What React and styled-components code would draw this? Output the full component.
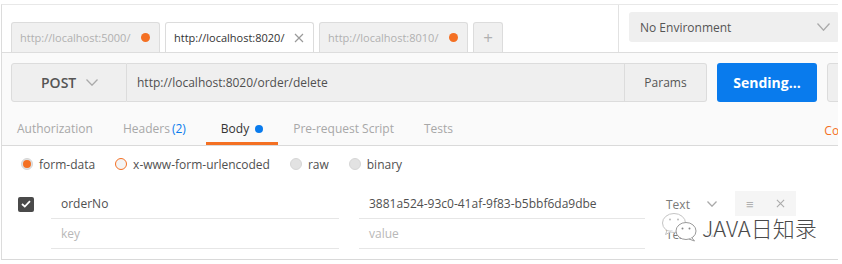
import React from 'react';
import styled, { createGlobalStyle } from 'styled-components';

const GlobalStyle = createGlobalStyle`
  html, body {
    margin: 0;
    padding: 0;
    background: #fff;
  }
  body {
    font-family: "Open Sans", "Noto Sans", sans-serif;
    font-size: 12px;
    color: #505050;
    overflow: hidden;
  }
`;

const Frame = styled.div`
  position: relative;
  width: 836px;
  height: 254px;
  margin: 4px 0 0 1px;
  border-top: 1px solid #e8e8e8;
  border-left: 1px solid #dcdcdc;
  border-bottom: 1px solid #d9d9d9;
  overflow: hidden;
`;

const Inner = styled.div`
  width: 930px;
`;

/* ---------- header: request tabs + environment ---------- */

const Header = styled.div`
  display: flex;
  height: 47px;
  border-bottom: 1px solid #dddddd;
  background: #fff;
`;

const TabStrip = styled.div`
  width: 607px;
  padding-left: 9px;
  display: flex;
  align-items: flex-end;
  gap: 5px;
  border-right: 1px solid #e2e2e2;
`;

const ReqTab = styled.div`
  box-sizing: border-box;
  width: ${p => (p.$plus ? 30 : 149)}px;
  height: 30px;
  display: flex;
  align-items: center;
  justify-content: ${p => (p.$plus ? 'center' : 'space-between')};
  padding: ${p => (p.$plus ? '0' : '0 9px 0 8px')};
  border: 1px solid #dcdcdc;
  border-bottom: none;
  border-radius: 3px 3px 0 0;
  background: ${p => (p.$active ? '#ffffff' : '#f0f0f0')};
  color: ${p => (p.$active ? '#333333' : '#b0b0b0')};
  font-size: ${p => (p.$plus ? 17 : 11)}px;
  white-space: nowrap;
`;

const Dot = styled.span`
  display: inline-block;
  width: ${p => p.$size || 9}px;
  height: ${p => p.$size || 9}px;
  border-radius: 50%;
  background: ${p => p.$color};
  flex: none;
`;

const EnvArea = styled.div`
  padding: 7px 10px;
`;

const EnvSelect = styled.div`
  box-sizing: border-box;
  width: 210px;
  height: 30px;
  display: flex;
  align-items: center;
  justify-content: space-between;
  padding: 0 9px 0 11px;
  background: #efefef;
  border-radius: 3px;
  color: #555;
`;

/* ---------- request bar ---------- */

const RequestSection = styled.div`
  background: #fafafa;
  border-bottom: 1px solid #dadada;
`;

const RequestBar = styled.div`
  display: flex;
  gap: 10px;
  height: 39px;
  padding: 10px 9px 0;
`;

const UrlGroup = styled.div`
  display: flex;
  width: 696px;
  flex: none;
`;

const Method = styled.div`
  box-sizing: border-box;
  width: 116px;
  display: flex;
  align-items: center;
  gap: 10px;
  padding-left: 29px;
  background: #efefef;
  border: 1px solid #dcdcdc;
  border-radius: 3px 0 0 3px;
  font-size: 14px;
  font-weight: 600;
  color: #555;
`;

const UrlInput = styled.div`
  flex: 1;
  display: flex;
  align-items: center;
  padding-left: 10px;
  background: #efefef;
  border: 1px solid #dcdcdc;
  border-left: none;
  color: #505050;
`;

const ParamsButton = styled.div`
  box-sizing: border-box;
  width: 82px;
  display: flex;
  align-items: center;
  justify-content: center;
  background: #efefef;
  border: 1px solid #dcdcdc;
  border-left: none;
  border-radius: 0 3px 3px 0;
  color: #555;
`;

const SendButton = styled.div`
  width: 100px;
  flex: none;
  display: flex;
  align-items: center;
  justify-content: center;
  background: #097bed;
  border-radius: 3px;
  color: #fff;
  font-size: 14px;
  font-weight: 700;
`;

const SaveButton = styled.div`
  box-sizing: border-box;
  width: 90px;
  flex: none;
  display: flex;
  align-items: center;
  padding-left: 10px;
  background: #efefef;
  border: 1px solid #dcdcdc;
  border-radius: 3px;
  color: #555;
  font-size: 14px;
  font-weight: 600;
`;

/* ---------- builder tabs ---------- */

const BuilderTabs = styled.div`
  display: flex;
  height: 33px;
  margin-top: 10px;
`;

const BuilderTab = styled.div`
  box-sizing: border-box;
  height: 33px;
  display: flex;
  align-items: center;
  gap: 6px;
  padding: 3px 15px 0;
  border-bottom: 3px solid ${p => (p.$active ? '#f47023' : 'transparent')};
  color: ${p => (p.$active ? '#333' : '#a8a8a8')};
  white-space: nowrap;
`;

const Count = styled.span`
  color: #097bed;
  margin-left: 2px;
  margin-right: 5px;
`;

const Links = styled.div`
  margin-left: auto;
  display: flex;
  align-items: center;
  gap: 15px;
  padding: 3px 20px 0 0;
  height: 30px;
  color: #f47023;
`;

/* ---------- body ---------- */

const Body = styled.div`
  padding: 12px 0 10px;
`;

const RadioRow = styled.div`
  display: flex;
  align-items: center;
  gap: 20px;
  padding-left: 19px;
  height: 12px;
`;

const RadioItem = styled.label`
  display: flex;
  align-items: center;
  gap: 6px;
  color: #505050;
`;

const Radio = styled.span`
  box-sizing: border-box;
  width: 12px;
  height: 12px;
  border-radius: 50%;
  display: flex;
  align-items: center;
  justify-content: center;
  background: ${p => (p.$ring ? '#f4f4f4' : '#e2e2e2')};
  border: ${p => (p.$ring ? '1.5px solid #f47023' : '1px solid #d6d6d6')};
  &::after {
    content: '';
    display: ${p => (p.$checked ? 'block' : 'none')};
    width: 8px;
    height: 8px;
    border-radius: 50%;
    background: #f47023;
  }
`;

const Table = styled.div`
  margin-top: 19px;
`;

const Row = styled.div`
  display: flex;
  height: 30px;
`;

const CheckCell = styled.div`
  width: 49px;
  padding-left: 16px;
  box-sizing: border-box;
  display: flex;
  align-items: center;
  flex: none;
`;

const Checkbox = styled.span`
  width: 16px;
  height: 15px;
  border-radius: 2px;
  background: #4a4a4a;
  display: flex;
  align-items: center;
  justify-content: center;
`;

const Cell = styled.div`
  box-sizing: border-box;
  width: ${p => p.$w}px;
  flex: none;
  display: flex;
  align-items: center;
  padding-left: 10px;
  border-bottom: 1px solid #e6e6e6;
  color: ${p => (p.$placeholder ? '#b8b8b8' : '#505050')};
`;

const Gap = styled.div`
  width: 20px;
  flex: none;
`;

const TypeCell = styled.div`
  width: 90px;
  flex: none;
  box-sizing: border-box;
  display: flex;
  align-items: center;
  gap: 17px;
  padding-left: 21px;
  color: #7a7a7a;
`;

const BulkBox = styled.div`
  width: 61px;
  height: 25px;
  margin-top: 2px;
  display: flex;
  align-items: center;
  justify-content: space-around;
  background: #f5f5f5;
  color: #b0b0b0;
  font-size: 13px;
`;

/* ---------- watermark overlay ---------- */

const Watermark = styled.div`
  position: absolute;
  left: 659px;
  top: 206px;
  display: flex;
  align-items: center;
  gap: 3px;
  pointer-events: none;
`;

const MarkText = styled.span`
  font-family: "Noto Sans CJK SC", "Noto Sans", sans-serif;
  font-size: 22px;
  font-weight: 300;
  color: #4a4a4a;
  text-shadow: 0 0 2px #fff, 1px 1px 0 #fff, -1px -1px 0 #fff, 1px -1px 0 #fff, -1px 1px 0 #fff;
`;

const Chevron = ({ w = 12, h = 7, color = '#b0b0b0' }) => (
  <svg width={w} height={h} viewBox={`0 0 ${w} ${h}`}>
    <polyline points={`0.5,0.5 ${w / 2},${h - 0.8} ${w - 0.5},0.5`} fill="none" stroke={color} strokeWidth="1.3" />
  </svg>
);

const Cross = ({ size = 10, color = '#999' }) => (
  <svg width={size} height={size} viewBox="0 0 10 10">
    <path d="M1 1L9 9M9 1L1 9" stroke={color} strokeWidth="1.2" fill="none" />
  </svg>
);

const WeChat = () => (
  <svg width="38" height="30" viewBox="0 0 38 30">
    <ellipse cx="13" cy="11" rx="11.5" ry="9.5" fill="rgba(255,255,255,0.8)" stroke="#c4c4c4" strokeWidth="1" />
    <path d="M6 18.5 L4.5 22.5 L9.5 20" fill="rgba(255,255,255,0.8)" stroke="#c4c4c4" strokeWidth="1" />
    <circle cx="9" cy="7.5" r="1" fill="#bbb" />
    <circle cx="17" cy="7.5" r="1" fill="#bbb" />
    <ellipse cx="25" cy="19" rx="10" ry="8.5" fill="#fff" stroke="#9a9a9a" strokeWidth="1" />
    <path d="M31 26 L33.5 29 L28 27" fill="#fff" stroke="#9a9a9a" strokeWidth="1" />
    <circle cx="21.5" cy="16.5" r="1" fill="#888" />
    <circle cx="28.5" cy="16.5" r="1" fill="#888" />
  </svg>
);

export default function App() {
  return (
    <>
      <GlobalStyle />
      <Frame>
        <Inner>
          <Header>
            <TabStrip>
              <ReqTab>
                http://localhost:5000/
                <Dot $color="#f47023" />
              </ReqTab>
              <ReqTab $active>
                http://localhost:8020/
                <Cross size={10} color="#9a9a9a" />
              </ReqTab>
              <ReqTab>
                http://localhost:8010/
                <Dot $color="#f47023" />
              </ReqTab>
              <ReqTab $plus>+</ReqTab>
            </TabStrip>
            <EnvArea>
              <EnvSelect>
                No Environment
                <Chevron w={13} h={8} color="#aaa" />
              </EnvSelect>
            </EnvArea>
          </Header>

          <RequestSection>
            <RequestBar>
              <UrlGroup>
                <Method>
                  POST
                  <Chevron w={12} h={7} color="#aaa" />
                </Method>
                <UrlInput>http://localhost:8020/order/delete</UrlInput>
                <ParamsButton>Params</ParamsButton>
              </UrlGroup>
              <SendButton>Sending...</SendButton>
              <SaveButton>Save</SaveButton>
            </RequestBar>
            <BuilderTabs>
              <BuilderTab>Authorization</BuilderTab>
              <BuilderTab>
                <span>
                  Headers<Count>(2)</Count>
                </span>
              </BuilderTab>
              <BuilderTab $active>
                Body
                <Dot $color="#097bed" $size={8} />
              </BuilderTab>
              <BuilderTab>Pre-request Script</BuilderTab>
              <BuilderTab>Tests</BuilderTab>
              <Links>
                <span>Cookies</span>
                <span>Code</span>
              </Links>
            </BuilderTabs>
          </RequestSection>

          <Body>
            <RadioRow>
              <RadioItem>
                <Radio $checked />
                form-data
              </RadioItem>
              <RadioItem>
                <Radio $ring />
                x-www-form-urlencoded
              </RadioItem>
              <RadioItem>
                <Radio />
                raw
              </RadioItem>
              <RadioItem>
                <Radio />
                binary
              </RadioItem>
            </RadioRow>

            <Table>
              <Row>
                <CheckCell>
                  <Checkbox>
                    <svg width="10" height="8" viewBox="0 0 10 8">
                      <polyline points="1,4 3.8,6.6 9,1.2" fill="none" stroke="#fff" strokeWidth="1.8" />
                    </svg>
                  </Checkbox>
                </CheckCell>
                <Cell $w={288}>orderNo</Cell>
                <Gap />
                <Cell $w={286}>3881a524-93c0-41af-9f83-b5bbf6da9dbe</Cell>
                <TypeCell>
                  Text
                  <Chevron w={10} h={6} color="#aaa" />
                </TypeCell>
                <BulkBox>
                  <span>≡</span>
                  <Cross size={9} color="#aaa" />
                </BulkBox>
              </Row>
              <Row>
                <CheckCell />
                <Cell $w={288} $placeholder>key</Cell>
                <Gap />
                <Cell $w={286} $placeholder>value</Cell>
                <TypeCell>
                  Text
                  <Chevron w={10} h={6} color="#aaa" />
                </TypeCell>
              </Row>
            </Table>
          </Body>
        </Inner>

        <Watermark>
          <WeChat />
          <MarkText>JAVA日知录</MarkText>
        </Watermark>
      </Frame>
    </>
  );
}
